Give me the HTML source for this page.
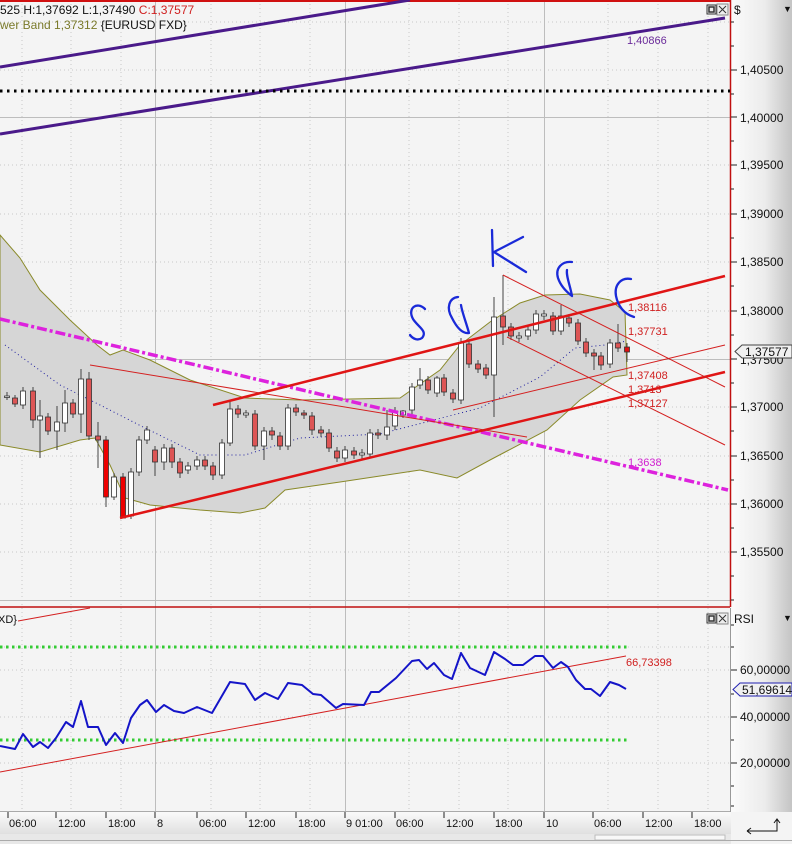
<!DOCTYPE html>
<html><head><meta charset="utf-8"><style>
html,body{margin:0;padding:0;width:792px;height:844px;overflow:hidden;background:#f2f2f2}
svg{display:block}
text{font-family:"Liberation Sans",sans-serif}
</style></head><body>
<svg width="792" height="844" viewBox="0 0 792 844" xmlns="http://www.w3.org/2000/svg">
<defs>
<linearGradient id="ax" x1="0" x2="1" y1="0" y2="0"><stop offset="0" stop-color="#fbfbfb"/><stop offset="0.55" stop-color="#ececec"/><stop offset="1" stop-color="#c4c4c4"/></linearGradient>
<linearGradient id="tx" x1="0" x2="0" y1="0" y2="1"><stop offset="0" stop-color="#fafafa"/><stop offset="1" stop-color="#e0e0e0"/></linearGradient>
</defs>
<rect x="0" y="0" width="792" height="844" fill="#f4f4f4"/>
<rect x="731" y="0" width="61" height="812" fill="url(#ax)"/>
<!-- grid main -->
<g stroke="#c8c8c8" stroke-width="1" stroke-dasharray="1,3">
<line x1="0" y1="70" x2="730" y2="70"/><line x1="0" y1="165" x2="730" y2="165"/><line x1="0" y1="214" x2="730" y2="214"/><line x1="0" y1="262" x2="730" y2="262"/><line x1="0" y1="311" x2="730" y2="311"/><line x1="0" y1="407" x2="730" y2="407"/><line x1="0" y1="456" x2="730" y2="456"/><line x1="0" y1="504" x2="730" y2="504"/><line x1="0" y1="552" x2="730" y2="552"/><line x1="0" y1="22" x2="730" y2="22"/>
<line x1="22" y1="0" x2="22" y2="812"/><line x1="71" y1="0" x2="71" y2="812"/><line x1="121" y1="0" x2="121" y2="812"/><line x1="211" y1="0" x2="211" y2="812"/><line x1="260" y1="0" x2="260" y2="812"/><line x1="310" y1="0" x2="310" y2="812"/><line x1="409" y1="0" x2="409" y2="812"/><line x1="459" y1="0" x2="459" y2="812"/><line x1="508" y1="0" x2="508" y2="812"/><line x1="608" y1="0" x2="608" y2="812"/><line x1="658" y1="0" x2="658" y2="812"/><line x1="708" y1="0" x2="708" y2="812"/>
<line x1="0" y1="647" x2="730" y2="647"/><line x1="0" y1="670" x2="730" y2="670"/><line x1="0" y1="717" x2="730" y2="717"/><line x1="0" y1="763" x2="730" y2="763"/>
</g>
<g stroke="#bdbdbd" stroke-width="1">
<line x1="0" y1="117.5" x2="730" y2="117.5"/><line x1="0" y1="359.5" x2="730" y2="359.5"/>
<line x1="155.5" y1="0" x2="155.5" y2="812"/><line x1="345.5" y1="0" x2="345.5" y2="812"/><line x1="544.5" y1="0" x2="544.5" y2="812"/>
<line x1="0" y1="600.5" x2="730" y2="600.5"/>
</g>
<!-- bollinger band -->
<path d="M0,235 L20,258 L40,290 L70,320 L97,345 L110,355 L123,350 L150,360 L190,380 L245,398 L300,400 L400,398 L440,370 L460,345 L490,322 L520,303 L545,295 L580,294 L610,300 L625,312 L627,375 L613,377 L580,400 L547,430 L490,460 L457,478 L420,470 L380,476 L340,482 L285,490 L265,508 L240,513 L200,510 L150,505 L125,498 L110,465 L95,438 L80,440 L40,452 L0,445 Z" fill="#d6d6d6" stroke="#8a8a2a" stroke-width="1"/>
<path d="M5,345 L60,385 L100,405 L145,428 L200,455 L245,455 L300,438 L380,434 L480,408 L540,377 L575,348 L605,345 L627,341" fill="none" stroke="#2020a0" stroke-width="1" stroke-dasharray="1,3"/>
<!-- top red & border -->
<line x1="0" y1="1" x2="730" y2="1" stroke="#d01010" stroke-width="2"/>
<line x1="730.5" y1="0" x2="730.5" y2="607" stroke="#c01010" stroke-width="1.5"/>
<!-- purple -->
<line x1="0" y1="67" x2="410" y2="0" stroke="#4a1a8a" stroke-width="3"/>
<line x1="0" y1="134" x2="725" y2="18" stroke="#4a1a8a" stroke-width="3"/>
<line x1="0" y1="91" x2="730" y2="91" stroke="#000" stroke-width="3" stroke-dasharray="2.5,4.5"/>
<text x="627" y="44" font-size="11" fill="#6a2a9a">1,40866</text>
<!-- candles wicks -->
<path stroke="#444" stroke-width="1" fill="none" d="M7,392V400M15,395V407M23,387V409M33,387V428M40,400V458M48,413V435M57,406V450M65,390V432M73,399V418M81,369V433M89,372V440M98,422V468M106,436V507M114,473V500M123,473V518M131,468V519M139,436V476M147,426V444M155,446V476M164,444V470M172,444V468M180,458V478M188,462V474M197,456V470M205,456V470M213,462V480M222,439V479M230,400V446M238,405V418M246,410V418M255,410V450M264,427V460M272,427V440M280,432V450M288,404V450M296,404V416M304,410V419M312,412V435M321,426V437M329,429V452M337,447V462M345,446V462M354,447V459M362,449V459M370,429V458M378,429V439M387,410V440M395,407V430M403,410V418M412,383V414M420,368V389M428,376V394M437,376V397M444,374V396M453,389V403M461,338V404M469,340V368M478,360V373M486,364V379M494,297V417M503,275V345M511,323V340M519,332V342M528,326V340M536,310V334M544,310V320M553,312V335M561,305V335M569,314V327M578,319V345M586,338V357M594,349V370M601,352V370M610,339V368M618,324V352M627,343V362"/>
<g stroke="#333" stroke-width="0.8">
<g fill="#fff">
<rect x="4.5" y="396" width="5" height="1.5"/><rect x="20.5" y="391" width="5" height="14"/><rect x="37.5" y="416" width="5" height="4"/><rect x="54.5" y="422" width="5" height="9"/><rect x="62.5" y="403" width="5" height="20"/><rect x="78.5" y="379" width="5" height="35"/><rect x="111.5" y="477" width="5" height="20"/><rect x="128.5" y="472" width="5" height="44"/><rect x="136.5" y="440" width="5" height="32"/><rect x="144.5" y="430" width="5" height="10"/><rect x="161.5" y="448" width="5" height="14"/><rect x="185.5" y="466" width="5" height="4"/><rect x="194.5" y="460" width="5" height="6"/><rect x="219.5" y="443" width="5" height="32"/><rect x="227.5" y="409" width="5" height="34"/><rect x="243.5" y="413" width="5" height="2"/><rect x="261.5" y="431" width="5" height="15"/><rect x="285.5" y="408" width="5" height="38"/><rect x="342.5" y="450" width="5" height="8"/><rect x="359.5" y="453" width="5" height="2"/><rect x="367.5" y="433" width="5" height="21"/><rect x="384.5" y="427" width="5" height="8"/><rect x="392.5" y="411" width="5" height="15"/><rect x="400.5" y="411" width="5" height="4"/><rect x="409.5" y="387" width="5" height="23"/><rect x="417.5" y="380" width="5" height="5"/><rect x="434.5" y="378" width="5" height="15"/><rect x="458.5" y="343" width="5" height="57"/><rect x="491.5" y="317" width="5" height="58"/><rect x="516.5" y="336" width="5" height="2"/><rect x="525.5" y="330" width="5" height="6"/><rect x="533.5" y="314" width="5" height="16"/><rect x="541.5" y="314" width="5" height="2"/><rect x="558.5" y="316" width="5" height="15"/><rect x="607.5" y="343" width="5" height="21"/>
</g>
<g fill="#dd5555">
<rect x="12.5" y="398" width="5" height="6"/><rect x="30.5" y="391" width="5" height="29"/><rect x="45.5" y="417" width="5" height="14"/><rect x="70.5" y="403" width="5" height="11"/><rect x="86.5" y="379" width="5" height="57"/><rect x="95.5" y="436" width="5" height="4"/><rect x="152.5" y="450" width="5" height="12"/><rect x="169.5" y="448" width="5" height="14"/><rect x="177.5" y="462" width="5" height="11"/><rect x="202.5" y="460" width="5" height="6"/><rect x="210.5" y="466" width="5" height="9"/><rect x="235.5" y="409" width="5" height="5"/><rect x="252.5" y="414" width="5" height="32"/><rect x="269.5" y="431" width="5" height="4"/><rect x="277.5" y="436" width="5" height="10"/><rect x="293.5" y="408" width="5" height="4"/><rect x="301.5" y="413" width="5" height="2"/><rect x="309.5" y="416" width="5" height="14"/><rect x="318.5" y="430" width="5" height="3"/><rect x="326.5" y="433" width="5" height="15"/><rect x="334.5" y="451" width="5" height="7"/><rect x="351.5" y="451" width="5" height="4"/><rect x="375.5" y="433" width="5" height="2"/><rect x="425.5" y="380" width="5" height="10"/><rect x="441.5" y="378" width="5" height="14"/><rect x="450.5" y="393" width="5" height="6"/><rect x="466.5" y="344" width="5" height="20"/><rect x="475.5" y="364" width="5" height="5"/><rect x="483.5" y="368" width="5" height="7"/><rect x="500.5" y="316" width="5" height="11"/><rect x="508.5" y="327" width="5" height="9"/><rect x="550.5" y="316" width="5" height="15"/><rect x="566.5" y="318" width="5" height="5"/><rect x="575.5" y="323" width="5" height="18"/><rect x="583.5" y="342" width="5" height="11"/><rect x="591.5" y="353" width="5" height="3"/><rect x="598.5" y="356" width="5" height="9"/><rect x="615.5" y="343" width="5" height="5"/><rect x="624.5" y="347" width="5" height="5" fill="#e01010"/>
</g>
<g fill="#ee0000"><rect x="103.5" y="440" width="5" height="57"/><rect x="120.5" y="477" width="5" height="41"/></g>
</g>
<!-- trend lines -->
<line x1="0" y1="319" x2="728" y2="490" stroke="#dd22dd" stroke-width="3.5" stroke-dasharray="10,3,3,3"/>
<line x1="213" y1="405" x2="725" y2="276" stroke="#e01515" stroke-width="2.5"/>
<line x1="120" y1="518" x2="725" y2="372" stroke="#e01515" stroke-width="2.5"/>
<g stroke="#d42020" stroke-width="1">
<line x1="90" y1="365" x2="527" y2="437"/>
<line x1="453" y1="410" x2="725" y2="345"/>
<line x1="503" y1="275" x2="725" y2="387"/>
<line x1="507" y1="337" x2="725" y2="445"/>
</g>
<g font-size="11" fill="#d02020">
<text x="628" y="311">1,38116</text><text x="628" y="335">1,37731</text><text x="628" y="379">1,37408</text><text x="628" y="393">1,3713</text><text x="628" y="407">1,37127</text>
<text x="628" y="466" fill="#d020d0">1,3638</text>
</g>
<!-- handwriting -->
<g fill="none" stroke="#1a2ad8" stroke-width="2.3" stroke-linecap="round" stroke-linejoin="round">
<path d="M425,309 C417,301 407,308 413,319 C418,327 428,331 422,338 C418,341 413,339 410,335"/>
<path d="M458,297 C449,298 446,308 452,318 C456,326 462,334 469,333 C466,322 462,312 461,305"/>
<path d="M492,230 L493,266 M523,237 L494,252 L526,272"/>
<path d="M572,262 C562,261 555,268 558,278 C561,287 568,293 572,296 C570,285 566,276 567,270"/>
<path d="M631,279 C621,277 614,285 616,296 C618,306 624,314 634,317"/>
</g>
<!-- top text -->
<text x="0" y="14" font-size="12" fill="#111">525 H:1,37692 L:1,37490 <tspan fill="#d02020">C:1,37577</tspan></text>
<text x="0" y="29" font-size="12" fill="#7a7a2a">wer Band 1,37312 <tspan fill="#111">{EURUSD FXD}</tspan></text>
<!-- close icons main -->
<rect x="707" y="5" width="9" height="9" fill="#eee" stroke="#333"/><rect x="709" y="7" width="5" height="5" fill="none" stroke="#333" stroke-width="1.5"/>
<rect x="717" y="4" width="11" height="11" fill="#eee" stroke="#888"/><path d="M719,6 L726,13 M726,6 L719,13" stroke="#333"/>
<!-- right axis -->
<g stroke="#222" stroke-width="1">
<path d="M731,22h3M731,46h3M731,70h6M731,94h3M731,117h6M731,141h3M731,165h6M731,189h3M731,214h6M731,238h3M731,262h6M731,286h3M731,311h6M731,335h3M731,359h6M731,383h3M731,407h6M731,431h3M731,456h6M731,480h3M731,504h6M731,528h3M731,552h6M731,576h3M731,600h3"/>
<path d="M731,625h3M731,647h3M731,670h6M731,694h3M731,717h6M731,740h3M731,763h6M731,786h3M731,806h3"/>
</g>
<g font-size="12" fill="#111">
<text x="734" y="14">$</text><text x="783" y="12" font-size="9">▼</text>
<text x="740" y="74">1,40500</text><text x="740" y="122">1,40000</text><text x="740" y="169">1,39500</text><text x="740" y="218">1,39000</text><text x="740" y="266">1,38500</text><text x="740" y="315">1,38000</text><text x="740" y="364">1,37500</text><text x="740" y="411">1,37000</text><text x="740" y="460">1,36500</text><text x="740" y="508">1,36000</text><text x="740" y="556">1,35500</text>
</g>
<path d="M742,345 H792 V358 H742 L735,351.5 Z" fill="#f0f0f0" stroke="#444"/>
<text x="745" y="356" font-size="12" fill="#111">1,37577</text>
<!-- RSI panel -->
<line x1="0" y1="607" x2="730" y2="607" stroke="#c01010" stroke-width="1.5"/>
<line x1="730.5" y1="608" x2="730.5" y2="812" stroke="#999"/>
<line x1="0" y1="811.5" x2="730" y2="811.5" stroke="#aaa"/>
<text x="-2" y="623" font-size="11" fill="#111">XD}</text>
<line x1="18" y1="621" x2="90" y2="608" stroke="#d42020"/>
<rect x="707" y="614" width="9" height="9" fill="#eee" stroke="#333"/><rect x="709" y="616" width="5" height="5" fill="none" stroke="#333" stroke-width="1.5"/>
<rect x="717" y="613" width="11" height="11" fill="#eee" stroke="#888"/><path d="M719,615 L726,622 M726,615 L719,622" stroke="#333"/>
<text x="734" y="623" font-size="12" fill="#111">RSI</text><text x="783" y="621" font-size="9" fill="#111">▼</text>
<line x1="0" y1="647" x2="627" y2="647" stroke="#33cc33" stroke-width="3" stroke-dasharray="2.5,3.5"/>
<line x1="0" y1="740" x2="627" y2="740" stroke="#33cc33" stroke-width="3" stroke-dasharray="2.5,3.5"/>
<line x1="0" y1="772" x2="626" y2="656" stroke="#d42020" stroke-width="1"/>
<text x="626" y="666" font-size="11" fill="#d02020">66,73398</text>
<polyline fill="none" stroke="#1414c8" stroke-width="2" stroke-linejoin="round" points="0,746 15,749 23,734 33,747 40,742 48,748 56,738 66,722 73,727 81,701 88,727 98,727 106,745 115,733 123,743 131,718 140,705 147,700 156,712 164,705 174,711 184,713 197,707 212,713 230,682 245,684 255,700 265,693 278,699 288,683 302,685 313,694 321,695 336,708 343,704 364,705 371,692 379,692 396,678 412,661 419,660 427,669 434,663 444,675 452,679 461,653 470,668 485,675 494,652 505,659 513,665 523,665 535,656 543,656 553,668 561,662 568,667 576,680 585,689 591,689 600,696 610,682 619,685 626,689"/>
<g font-size="12" fill="#111">
<text x="740" y="674">60,00000</text><text x="740" y="721">40,00000</text><text x="740" y="767">20,00000</text>
</g>
<path d="M740,683 H792 V696 H740 L733,689.5 Z" fill="#f0f0f0" stroke="#2020b0"/>
<text x="742" y="694" font-size="12" fill="#111">51,69614</text>
<!-- time axis -->
<rect x="0" y="812" width="731" height="22" fill="url(#tx)"/>
<rect x="0" y="834" width="731" height="10" fill="#e8e8e8"/>
<rect x="595" y="835" width="130" height="5" fill="#f8f8f8" stroke="#bbb"/>
<line x1="0" y1="840.5" x2="792" y2="840.5" stroke="#aaa"/>
<g stroke="#222"><path d="M8,812v6M56,812v6M106,812v6M155,812v6M197,812v6M246,812v6M296,812v6M345,812v6M395,812v6M444,812v6M494,812v6M544,812v6M593,812v6M643,812v6M692,812v6"/></g>
<g font-size="11" fill="#111">
<text x="9" y="827">06:00</text><text x="58" y="827">12:00</text><text x="108" y="827">18:00</text><text x="157" y="827">8</text><text x="199" y="827">06:00</text><text x="248" y="827">12:00</text><text x="298" y="827">18:00</text><text x="346" y="827">9 01:00</text><text x="396" y="827">06:00</text><text x="446" y="827">12:00</text><text x="495" y="827">18:00</text><text x="546" y="827">10</text><text x="594" y="827">06:00</text><text x="645" y="827">12:00</text><text x="694" y="827">18:00</text>
</g>
<path d="M747,831 H777 V820 M774,823 L777,819 L780,823 M747,831 L751,828 M747,831 L751,834" fill="none" stroke="#111" stroke-width="1"/>
</svg>
</body></html>
